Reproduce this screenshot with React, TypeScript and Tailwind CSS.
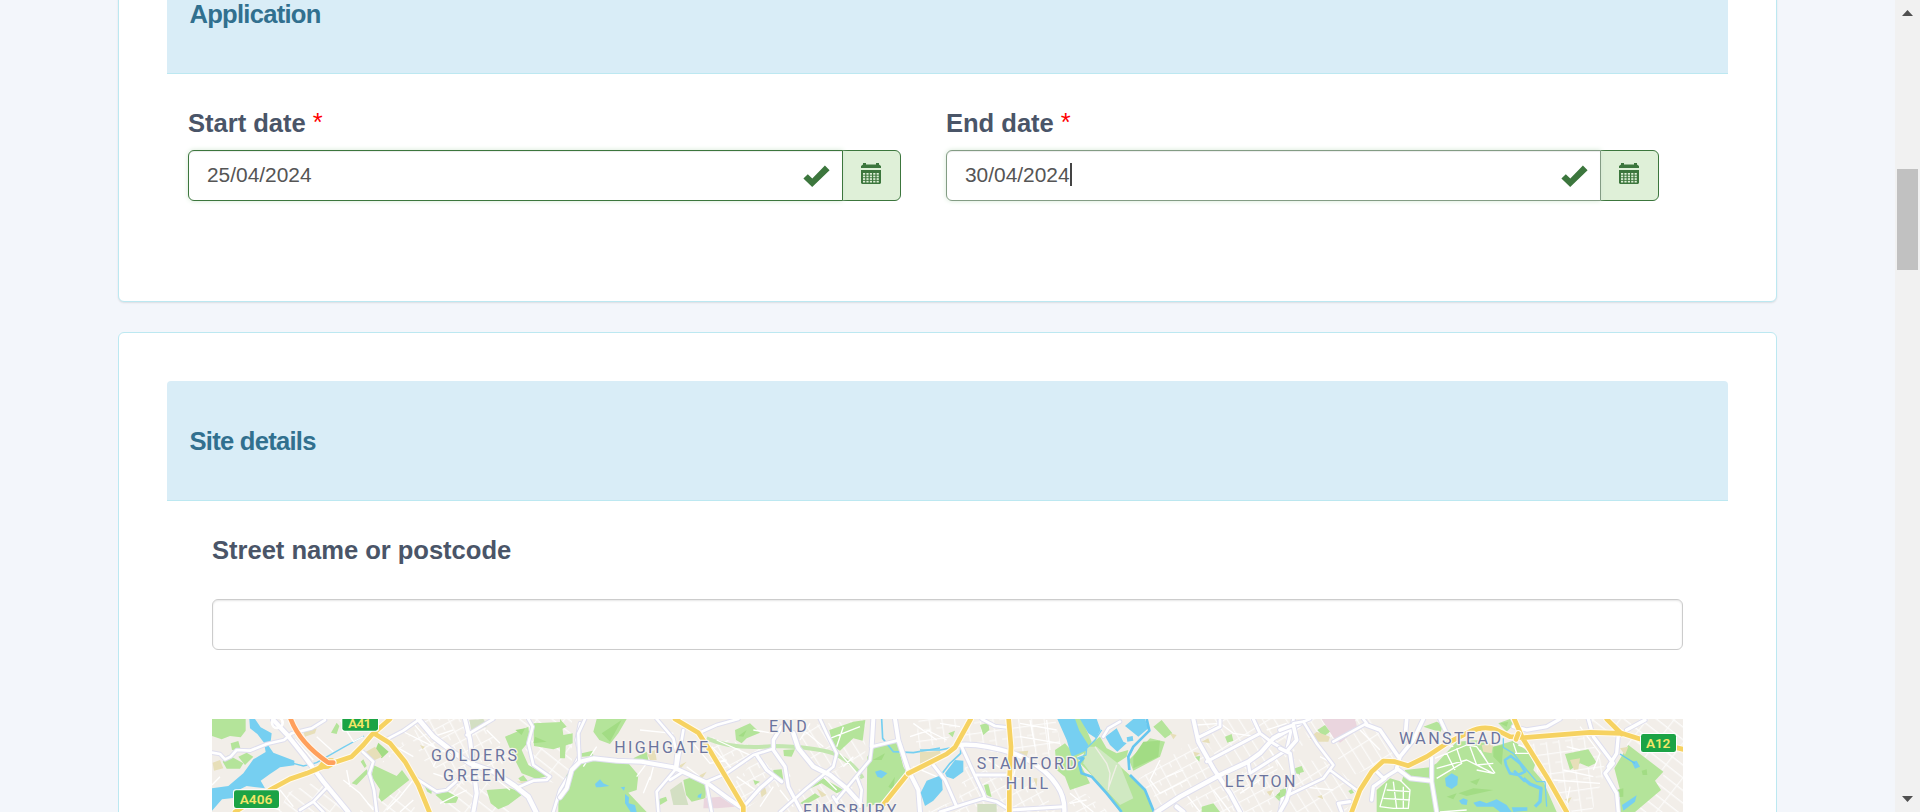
import React from "react";

type Line = { d: string; w?: number };

const casing = "#dedeee";

function Streets({ lines }: { lines: Line[] }) {
  return (
    <g fill="none" strokeLinecap="round" strokeLinejoin="round">
      {lines.map((l, i) => (
        <path key={"c" + i} d={l.d} stroke={casing} strokeWidth={(l.w ?? 9) + 7} />
      ))}
      {lines.map((l, i) => (
        <path key={"f" + i} d={l.d} stroke="#ffffff" strokeWidth={(l.w ?? 9) + 1} />
      ))}
    </g>
  );
}

function Trunk({ d, color = "#f6d261" }: { d: string; color?: string }) {
  return (
    <g fill="none" strokeLinecap="round" strokeLinejoin="round">
      <path d={d} stroke="#fffaf0" strokeWidth={20} />
      <path d={d} stroke={color} strokeWidth={14} />
    </g>
  );
}

function Minor({ d }: { d: string }) {
  return <path d={d} fill="none" stroke="#ffffff" strokeWidth={4} strokeLinejoin="round" />;
}

function Green({ d, c = "#b4e49a" }: { d: string; c?: string }) {
  return <path d={d} fill={c} />;
}

function Water({ d }: { d: string }) {
  return <path d={d} fill="#76cff1" />;
}

function Place({ x, y, w, children }: { x: number; y: number; w: number; children: string }) {
  return (
    <text
      x={x}
      y={y}
      textLength={w}
      lengthAdjust="spacing"
      fontSize={48}
      fontWeight={400}
      fontFamily="Roboto, 'Liberation Sans', sans-serif"
      fill="#6b749e"
      stroke="#f6f3ef"
      strokeWidth={8}
      strokeLinejoin="round"
      paintOrder="stroke"
    >
      {children}
    </text>
  );
}

function Shield({ x, y, w, h, tx, tw, base, children }: { x: number; y: number; w: number; h: number; tx: number; tw: number; base: number; children: string }) {
  return (
    <g>
      <rect x={x - 3} y={y - 3} width={w + 6} height={h + 6} rx={9} fill="#ffffff" />
      <rect x={x} y={y} width={w} height={h} rx={7} fill="#1ba345" />
      <text x={tx} y={base} textLength={tw} lengthAdjust="spacing" fontSize={41} fontWeight={600} fontFamily="Roboto, 'Liberation Sans', sans-serif" fill="#f3e668">
        {children}
      </text>
    </g>
  );
}

function StreetMap() {
  return (
    <svg className="block h-[93px] w-full" viewBox="0 0 4413 279" preserveAspectRatio="none">
      <defs>
        <pattern id="grid-a" width="52" height="34" patternUnits="userSpaceOnUse" patternTransform="rotate(-28)">
          <path d="M0 2H52M2 0V34M30 2V18" stroke="#fff" strokeWidth="3.5" fill="none" />
        </pattern>
        <pattern id="grid-b" width="38" height="60" patternUnits="userSpaceOnUse" patternTransform="rotate(-8)">
          <path d="M0 2H38M2 0V60M20 30H38" stroke="#fff" strokeWidth="3.5" fill="none" />
        </pattern>
        <pattern id="grid-c" width="30" height="70" patternUnits="userSpaceOnUse" patternTransform="rotate(-32)">
          <path d="M0 2H30M2 0V70" stroke="#fff" strokeWidth="3.5" fill="none" />
        </pattern>
        <pattern id="grid-d" width="64" height="30" patternUnits="userSpaceOnUse" patternTransform="rotate(38)">
          <path d="M0 2H64M2 0V30" stroke="#fff" strokeWidth="3.5" fill="none" />
        </pattern>
      </defs>
      <rect width="4413" height="279" fill="#f2eee9" />
      <g opacity=".8">
        <path d="M490 150L640 0H800L900 130L760 200L640 130L600 60Z" fill="url(#grid-a)" />
        <path d="M470 250L560 210L620 279H440ZM690 210L800 160L900 279H700Z" fill="url(#grid-d)" />
        <path d="M230 220L330 180L420 279H200Z" fill="url(#grid-d)" />
        <path d="M920 0H1080V200L960 180Z" fill="url(#grid-d)" />
        <path d="M1480 50L1680 90L1540 170ZM1640 110L1720 190L1600 270L1560 200Z" fill="url(#grid-a)" />
        <path d="M1780 20L1960 0L1960 120L1840 160L1760 90ZM1760 210L1880 150L1940 230V279H1700Z" fill="url(#grid-c)" />
        <path d="M2120 0H2250L2200 70L2110 90ZM2260 0H2530L2560 140L2400 110L2250 80Z" fill="url(#grid-b)" />
        <path d="M2260 140L2480 190L2530 279H2140L2240 240Z" fill="url(#grid-a)" />
        <path d="M2590 200L2690 279H2560ZM2780 180L2950 60L3010 170L2850 260Z" fill="url(#grid-a)" />
        <path d="M2960 0L3240 0L3300 60L3200 130L3050 160L2980 70Z" fill="url(#grid-c)" />
        <path d="M3000 190L3200 120L3180 279H2900Z" fill="url(#grid-a)" />
        <path d="M3240 120L3360 130L3440 210L3400 279H3230Z" fill="url(#grid-c)" />
        <path d="M3280 0H3480L3560 110L3420 170L3330 60Z" fill="url(#grid-c)" />
        <path d="M3920 80L4130 50L4180 150L4140 279H4080L3960 140Z" fill="url(#grid-b)" />
        <path d="M4090 0H4413V279H4270L4360 160L4220 60Z" fill="url(#grid-d)" />
      </g>

      <g transform="translate(-36 -27)">
        <Green d="M36 27H137V62L122 82L90 78L65 88L36 78ZM92 100L115 93L122 118L96 120ZM68 155L85 135L130 160L120 176H80ZM115 140L140 128L160 140L135 165Z" />
        <Green d="M520 165L590 198L606 180L628 210L545 275L536 262L540 238L515 200ZM455 220L500 178L505 188L470 225ZM482 155L490 148L500 168L494 174ZM915 80L985 50L990 90L965 120L985 165L1045 198L1008 206L965 190L940 140ZM1000 40L1085 36L1090 75L1118 70V100L1060 118L1002 108ZM860 240L930 235L972 250L925 285L895 298L872 280ZM1075 306V262L1100 220L1150 150V306ZM706 254L740 244L775 262L768 278L735 280ZM672 224L698 232L694 252L682 245ZM393 68L410 38L418 48L410 72ZM550 32L575 27L562 45ZM955 205L970 196L985 215L962 214Z" />
        <Green d="M535 98L566 125L545 145L527 118ZM946 60L975 55L965 75ZM1005 80L1040 95L1000 100Z" c="#a2dc84" />
        <Green d="M490 130L525 110L546 140L520 152ZM38 158L60 150L70 175L42 182ZM310 65L350 55L345 70L315 80ZM660 105L675 110L668 118ZM950 215L990 212L985 224Z" c="#e7dfb9" />
        <Green d="M808 30L850 27L862 48L815 66Z" c="#d3dfc3" />
        <Water d="M148 27H165L182 52L215 70L212 95L206 108L220 128L283 152V166L240 172L228 180L210 192L182 212L195 235L140 228L105 245L100 264L66 268L36 302V235L85 228L130 190L160 148L197 126L192 98L172 72L150 55Z" />
        <path d="M280 160L310 168L350 158L430 112L492 78" fill="none" stroke="#76cff1" strokeWidth="4" />
        <Minor d="M285 88L340 150M350 80L400 125M420 30L460 95L490 80M570 100L640 140M600 60L700 110L780 145M640 40L720 130L700 170M430 210L480 250L520 300M640 210L600 260L560 300M440 180L450 230M700 190L760 210L800 200M720 280L800 240M860 190L820 160M860 60L900 100M240 240L280 290M180 280L240 300M880 200L930 240M60 200L36 225M640 270L600 306M700 80L760 60" />
        <Streets
          lines={[
            { d: "M220 30L262 75L310 135L370 215L445 306", w: 12 },
            { d: "M36 128L60 132L75 148L92 140L110 120L150 122L200 102L252 90L275 70L335 55L375 30", w: 7 },
            { d: "M655 27L700 80L765 130L810 160L880 185L945 228L985 260L1008 306", w: 13 },
            { d: "M795 27L810 90L820 170L830 250L820 306", w: 11 },
            { d: "M560 88L610 62L655 30M488 125L520 155L508 190L522 240L530 306", w: 7 },
            { d: "M340 275L378 235M300 300L340 275L370 306M800 75L880 27", w: 7 },
            { d: "M985 27L998 50L985 100L1000 165L1050 200L1040 210L1000 212L958 230", w: 7 },
            { d: "M1140 40L1130 90L1140 135L1110 190L1080 240L1060 306M640 200L710 245L740 240L790 195", w: 7 },
          ]}
        />
        <circle cx="232" cy="38" r="16" fill="none" stroke="#fff" strokeWidth="8" />
        <Trunk d="M105 306L215 237L270 207L320 190L380 165L455 140L490 105L515 75L570 27M525 72L570 100L615 155L655 225L688 306" />
        <path d="M345 180L372 145H400L405 165L385 176Z" fill="#f6d261" />
        <Trunk d="M272 27Q300 100 385 158L400 158" color="#ffa05c" />
        <Shield x={102} y={241} w={135} h={53} tx={119} tw={98} base={283}>A406</Shield>
        <Shield x={427} y={10} w={107} h={52} tx={444} tw={70} base={53}>A41</Shield>
      </g>

      <g transform="translate(1044 -27)">
        <Green d="M0 27L20 50L0 60ZM0 90L18 92L15 145H0ZM110 27H200L175 70L150 102L118 90L100 65ZM65 130L98 122L100 138L65 140ZM20 195L60 150L130 148L205 160L235 195L230 240L205 248L260 306H0V270L20 265ZM525 60L570 40L600 68L560 85L545 100L528 90ZM370 210L400 200L440 220L436 265L395 275L378 255ZM808 60L880 35L916 30L908 92L880 85L840 122L820 110ZM922 140L940 115L1010 92L1030 170L1042 190L960 280L920 290ZM640 180L665 178L670 210L640 200ZM670 120L705 118L695 140L672 138ZM296 268L318 260L322 272L300 285ZM740 240L790 205L850 240L830 250L785 220ZM720 280L765 250L780 260L735 285ZM580 210L600 215L585 225ZM220 145L260 125L265 150L230 155Z" />
        <path d="M440 85Q520 120 640 108Q760 110 820 130Q880 155 908 205" fill="none" stroke="#c3e6b0" strokeWidth="12" />
        <Green d="M125 70L185 30L150 95ZM938 150L975 130L965 150ZM985 230L1005 200L1000 240ZM535 78L560 60L550 80Z" c="#a2dc84" />
        <Green d="M260 130L285 120L290 150L270 150ZM600 240L615 232L620 250L605 262ZM770 235L800 255L785 262ZM410 200L440 185L420 215ZM350 170L380 155L360 178ZM1080 130L1140 122V140L1100 142Z" c="#e7dfb9" />
        <Green d="M330 240L365 215L385 285L340 285Z" c="#d3dfc3" />
        <Green d="M432 265L480 260L525 290L470 295H430Z" c="#ead5de" />
        <Water d="M105 222L120 208L130 220L148 228L120 232L108 232ZM182 232L195 230L192 242ZM195 252L207 262L206 280L225 285L230 306H212L195 280ZM415 255L425 250L422 264L412 262ZM945 185L962 180L982 190L965 205L952 200Z" />
        <path d="M965 27L968 85L1000 125L1060 128L1140 114" fill="none" stroke="#76cff1" strokeWidth="5" />
        <Minor d="M240 60L340 70M110 110L70 170M260 160L230 200M400 100L450 160L500 150M455 110L520 180M470 90L580 140M530 200L600 250M580 60L640 70M660 140L690 200M730 60L790 110M750 40L720 90M840 130L900 200M780 190L830 240M880 140L850 170M810 85L900 50M830 110L850 50M1060 40L1130 90M1050 80L1110 60M640 230L600 290M660 240L700 290M270 200L250 250M1060 170L1130 200M280 170L270 210M380 170L420 200" />
        <Streets
          lines={[
            { d: "M0 262L20 235L35 180L60 155L100 145L170 152L245 155L340 172L440 218L500 262L540 290", w: 11 },
            { d: "M75 27L55 70L58 150M290 27L340 85L350 130L345 180L290 245L295 306M370 60L350 180M370 185L330 210", w: 7 },
            { d: "M415 70L470 45L535 27M440 215L500 190L580 135L635 118M440 225L455 306", w: 7 },
            { d: "M665 50L640 90V120L675 170L685 230L725 306M635 205L600 235L555 285M590 135L620 180L665 215", w: 9 },
            { d: "M700 70L715 115L760 170L810 195L860 235L905 285", w: 12 },
            { d: "M660 306L740 235L820 170L830 130L800 70L780 27M830 270L880 210L930 150L935 110L1010 92M890 200L905 240L900 290M820 260L850 306", w: 7 },
            { d: "M940 27L935 110M1005 27L1015 90L1045 180L1075 240L1080 306", w: 11 },
          ]}
        />
        <Trunk d="M345 27L415 68L455 130L500 205L550 290V306M965 290L1045 190L1160 132L1185 112L1232 27" />
      </g>

      <g transform="translate(2124 -27)">
        <Green d="M180 45L205 38L208 60L190 75ZM85 70L105 62L98 82ZM405 120L435 100L470 140L510 220L450 240L435 200L410 180ZM500 110L540 80L560 115L590 130L625 120L620 140L590 160L640 205L680 250L700 306H600L520 200L480 160ZM700 50L725 30L757 70L735 85ZM627 150L690 85L735 95L720 140L640 182ZM915 80L935 72L940 92L922 98ZM192 225L205 222L215 262L200 255ZM845 290L880 280L900 306H845ZM1065 260L1090 235L1100 245L1085 280ZM1120 180L1140 170V195ZM825 140L840 138L838 155ZM455 27H485L515 95L500 125L470 140L460 130L500 110Z" />
        <Green d="M500 110L530 110L600 165L640 265L600 285L520 200L490 160Z" c="#d0e9c2" />
        <Green d="M640 140L670 95L720 92L715 140L640 175ZM1070 255L1090 240L1085 260Z" c="#a2dc84" />
        <Green d="M0 125L60 125L70 140L0 170ZM290 125L325 122L320 140L300 138ZM750 70L770 75L760 88ZM845 95L865 85L870 100ZM820 125L840 130L825 140ZM1040 245L1060 240L1050 258ZM340 205L352 205L350 230Z" c="#e7dfb9" />
        <Green d="M172 282L230 282V306H172Z" c="#d3dfc3" />
        <Water d="M412 27H465L478 62L505 105L498 122L455 140L440 90ZM480 27H530L542 60L528 85L505 70ZM556 80L590 55L610 95L620 100L592 125L570 105ZM615 48L640 27H675L685 55L655 80ZM620 82L638 78L640 92L622 95ZM2 248L20 212L65 195L68 240L40 272L15 288ZM75 190L105 150L130 152V185L100 207L80 200Z" />
        <path d="M0 120H60L100 112M122 116V130L90 160L68 188" fill="none" stroke="#76cff1" strokeWidth="5" strokeLinejoin="round" />
        <path d="M475 145L490 145L477 160L485 190L515 200L560 250L605 306M680 27L688 62L640 110L625 140L628 180M630 195L675 240L702 306" fill="none" stroke="#66c6ef" strokeWidth="8" strokeLinejoin="round" />
        <path d="M545 60L525 90L500 115L498 135L470 145" fill="none" stroke="#76cff1" strokeWidth="4" />
        <path d="M525 110L560 160L570 190L565 240M590 165L565 235" fill="none" stroke="#f0efe6" strokeWidth="4" />
        <Minor d="M720 150L690 210L720 250L800 210M740 200L790 180M830 45L900 40L940 70L1010 80M1040 60L1100 40M880 240L930 306M800 255L840 306M980 210L1060 170M1050 120L1090 180M960 250L1020 210M300 40L410 60M300 80L420 100M330 30L345 110M380 30L390 120M20 60L80 90M60 40L120 50M190 140L250 180M290 160L280 200M450 250L520 306M450 280L500 270" />
        <Streets
          lines={[
            { d: "M110 105Q180 98 280 130Q370 165 410 225Q435 260 433 306", w: 12 },
            { d: "M40 165L75 210L110 290M125 110L150 165L190 250L195 265M60 306L140 280L190 265L230 275L270 300L430 290M170 195H265", w: 8 },
            { d: "M185 27L225 48L260 52M550 80L565 55L600 35", w: 7 },
            { d: "M820 27L835 95L880 175L930 250L960 306", w: 11 },
            { d: "M710 306L780 260L900 195L985 155L1020 130L1060 85L1140 40M770 290L790 306", w: 12 },
            { d: "M1000 27L1020 70L1060 100L1110 130L1120 190L1090 250L1080 306M840 80L900 50V30M1020 70L860 155M985 160L990 190L1100 120L1120 30", w: 8 },
          ]}
        />
        <Trunk d="M266 27L273 110L268 220V306" />
        <Trunk d="M-35 190L80 132L105 112L152 27" />
      </g>

      <g transform="translate(3204 -27)">
        <Green d="M125 27H225L233 58L180 98L160 82Z" c="#ead5de" />
        <Green d="M112 60L135 45L150 65L130 80ZM430 50L470 35L490 45L482 65L460 60ZM655 40L690 27L700 45L680 65ZM45 175L65 168L72 185L50 192ZM0 240L18 235V255L0 265ZM205 243L215 238L222 248L212 252ZM375 180L450 172L470 160L530 95L600 90L640 110L700 92L745 125L765 165L760 180L790 215L830 306H290V240L330 205L365 215ZM855 132L925 118L950 158L925 170L900 160L870 180ZM1003 175L1045 105L1150 185L1125 212L1143 240L1065 306H1020V240Z" />
        <Green d="M535 250L580 235L640 240L560 258ZM570 215L600 205L590 225ZM500 260L530 250L520 268ZM640 110L670 105L665 165L640 140ZM1010 240L1030 235V260L1010 262ZM1085 182L1100 178L1102 195L1088 195ZM660 40L685 35L680 50Z" c="#a2dc84" />
        <Green d="M88 85L110 65L150 80L145 95L110 95ZM605 105L640 98L635 130L610 125ZM870 150L900 145L895 178L882 180ZM112 260L125 255L130 268ZM1020 115L1045 110L1035 135ZM855 268L875 262L865 280Z" c="#e7dfb9" />
        <Water d="M495 205L515 190L534 200L532 225L515 237L498 228ZM537 272L550 265L563 270L560 285L545 283ZM580 278L600 272L620 280L650 268L680 285L695 306H660L640 290L590 290ZM1026 285L1070 256L1065 275L1030 302ZM1055 155L1070 152L1080 170L1065 176ZM695 292L742 292V302L700 306Z" />
        <path d="M670 85V112L700 130L740 180L770 215H795L800 290" fill="none" stroke="#76cff1" strokeWidth="4" strokeLinejoin="round" />
        <path d="M675 150L692 138L720 160L735 185L715 195L690 190L678 165ZM702 182L735 215" fill="none" stroke="#76cff1" strokeWidth="8" strokeLinejoin="round" />
        <path d="M730 205L750 222L783 235L780 275L765 290" fill="none" stroke="#76cff1" strokeWidth="10" strokeLinejoin="round" />
        <path d="M1020 132L1065 160" fill="none" stroke="#66c6ef" strokeWidth="4" />
        <Minor d="M465 145L560 105L590 110L645 190M470 175L560 150L640 190L590 180M500 130L525 180M530 115L545 160L470 205M570 110L590 165L640 160M600 120L630 170M320 220L300 290L340 295H385L390 240L360 210M320 240L390 245M310 265L390 270M340 215L350 295M370 230V295M480 100L520 110M700 100L710 130M715 105L760 120M705 130L760 130M850 180L940 200M820 210L960 220M870 230L860 280M900 50L960 130L940 180M120 140L160 160M60 230L160 240M240 60L300 120M480 306L560 300M860 110L900 120" />
        <Streets
          lines={[
            { d: "M0 115L30 130L40 200L20 270L0 306M0 60L40 45L50 90L20 125", w: 10 },
            { d: "M25 255L130 205L160 165L110 100L70 35L40 40M70 35L90 27M150 180L230 240M160 95L260 40L250 27", w: 7 },
            { d: "M260 45L300 60L355 140M430 27L400 90L360 140L350 175L390 205L450 212M380 27L375 90", w: 10 },
            { d: "M455 140V215L470 306M350 180L310 205L290 185M315 205L280 230L275 270M210 275L175 280L185 306M480 27L500 70", w: 9 },
            { d: "M700 50L740 60L800 50L840 27M925 27L940 80L1000 160L975 190L1010 250L1015 306M1015 75L1010 130L985 170M1040 60L1095 30", w: 9 },
          ]}
        />
        <Trunk d="M215 306L240 240L275 185L310 153L345 155L385 167L440 140L500 100L570 65Q610 45 650 60L690 80L730 83L930 67L1025 70L1090 90L1240 125M703 27L728 85L800 200L860 306M980 27L1025 72" />
        <Trunk d="M715 70L708 88" />
        <Shield x={1083} y={72} w={105} h={54} tx={1098} tw={73} base={113}>A12</Shield>
      </g>

      <g transform="translate(-36 -27)">
        <Place x={693} y={152} w={258}>GOLDERS</Place>
        <Place x={729} y={212} w={187}>GREEN</Place>
        <Place x={1243} y={128} w={281}>HIGHGATE</Place>
        <Place x={1707} y={67} w={113}>END</Place>
        <Place x={1809} y={318} w={280}>FINSBURY</Place>
        <Place x={2330} y={177} w={300}>STAMFORD</Place>
        <Place x={2417} y={236} w={127}>HILL</Place>
        <Place x={3074} y={230} w={212}>LEYTON</Place>
        <Place x={3597} y={103} w={306}>WANSTEAD</Place>
      </g>
    </svg>
  );
}

function CheckIcon() {
  return (
    <svg className="h-[22px] w-[27px]" viewBox="0 0 27 22" fill="#3c763d">
      <path d="M.4 13.600L4.800 9.300L9.300 13.500L21.900.4L26.600 5.300L9.200 21.900Z" />
    </svg>
  );
}

function CalendarIcon() {
  const cells = [0, 1, 2, 3].flatMap((r) => [0, 1, 2, 3, 4].map((c) => [c, r]));
  return (
    <svg className="mr-[2px] mb-[4px] h-[21px] w-[20px]" viewBox="0 0 20 21" fill="#3c763d">
      <path d="M0 5V3L2 1.500V0H5V1.500H15V0H18V1.500L20 3V5Z" />
      <path d="M0 7H20V20L19 21H1L0 20Z" />
      {cells.map(([c, r]) => (
        <rect key={c + "-" + r} x={2 + c * 3.4} y={10 + r * 2.6} width="2.2" height="1.7" fill="#dff0d8" />
      ))}
    </svg>
  );
}

function DateField({ label, value, focused = false }: { label: string; value: string; focused?: boolean }) {
  return (
    <div className="w-[713px]">
      <div className="h-[50px] pt-[6px] text-[25.6px] leading-[34px] font-bold tracking-[-0.04px] text-[#4a5568]">
        {label} <span className="relative -top-px font-normal text-[#ff0000]">*</span>
      </div>
      <div className="flex h-[51px]">
        <div
          className={
            "relative z-10 flex w-[655px] items-center justify-between rounded-l-[6px] border bg-white pr-[12px] pl-[18px] " +
            (focused
              ? "border-[#839c84] shadow-[inset_0_1px_1px_rgba(0,0,0,0.075),0_0_5px_#d5e8d5]"
              : "border-[#3c763d] shadow-[inset_0_1px_1px_rgba(0,0,0,0.075),0_0_5px_#d5e8d5]")
          }
        >
          <span className="flex items-center pb-[2px] text-[20.9px] leading-[30px] text-[#555555]">
            {value}
            {focused && <span className="h-[23px] w-[2px] bg-[#444444]" />}
          </span>
          <CheckIcon />
        </div>
        <div className="-ml-px flex w-[59px] items-center justify-center rounded-r-[6px] border border-[#3c763d] bg-[#dff0d8]">
          <CalendarIcon />
        </div>
      </div>
    </div>
  );
}

function SectionHeader({ title }: { title: string }) {
  return (
    <div className="flex h-[120px] items-center rounded-t-[4px] border-b border-[#bce8f1] bg-[#d9edf7] pt-px pl-[22.5px] text-[25.6px] font-bold tracking-[-0.75px] text-[#31708f]">
      {title}
    </div>
  );
}

export default function App() {
  return (
    <div className="flex h-[812px] w-full overflow-hidden bg-[#f3f6fb] font-['Liberation_Sans',Arial,sans-serif]">
      <main className="-mt-[95px] flex flex-1 flex-col gap-[30px] pl-[118px]">
        <section className="h-[397px] w-[1659px] shrink-0 rounded-[6px] border border-[#bce8f1] bg-white px-[48px] pt-[48px] shadow-[0_1px_2px_rgba(0,0,0,0.1)]">
          <SectionHeader title="Application" />
          <div className="flex gap-[45px] pt-[26px] pl-[21px]">
            <DateField label="Start date" value="25/04/2024" />
            <DateField label="End date" value="30/04/2024" focused />
          </div>
        </section>
        <section className="h-[620px] w-[1659px] shrink-0 rounded-[6px] border border-[#bce8f1] bg-white px-[48px] pt-[48px]">
          <SectionHeader title="Site details" />
          <div className="px-[45px] pt-[33px]">
            <div className="h-[65px] text-[25.6px] leading-[32px] font-bold tracking-[-0.04px] text-[#4a5568]">Street name or postcode</div>
            <div className="mb-[69px] h-[51px] rounded-[6px] border border-[#cccccc] shadow-[inset_0_1px_2px_rgba(0,0,0,0.1)]" />
            <StreetMap />
          </div>
        </section>
      </main>
      <aside className="flex w-[25px] flex-col items-center bg-[#f1f1f1]">
        <svg className="mt-[10px] h-[6px] w-[11px]" viewBox="0 0 11 6" fill="#505050">
          <path d="M5.500 0L11 6H0Z" />
        </svg>
        <div className="mt-[153px] h-[101px] w-[21px] bg-[#c1c1c1]" />
        <svg className="mt-auto mb-[10px] h-[6px] w-[11px]" viewBox="0 0 11 6" fill="#505050">
          <path d="M0 0H11L5.500 6Z" />
        </svg>
      </aside>
    </div>
  );
}
